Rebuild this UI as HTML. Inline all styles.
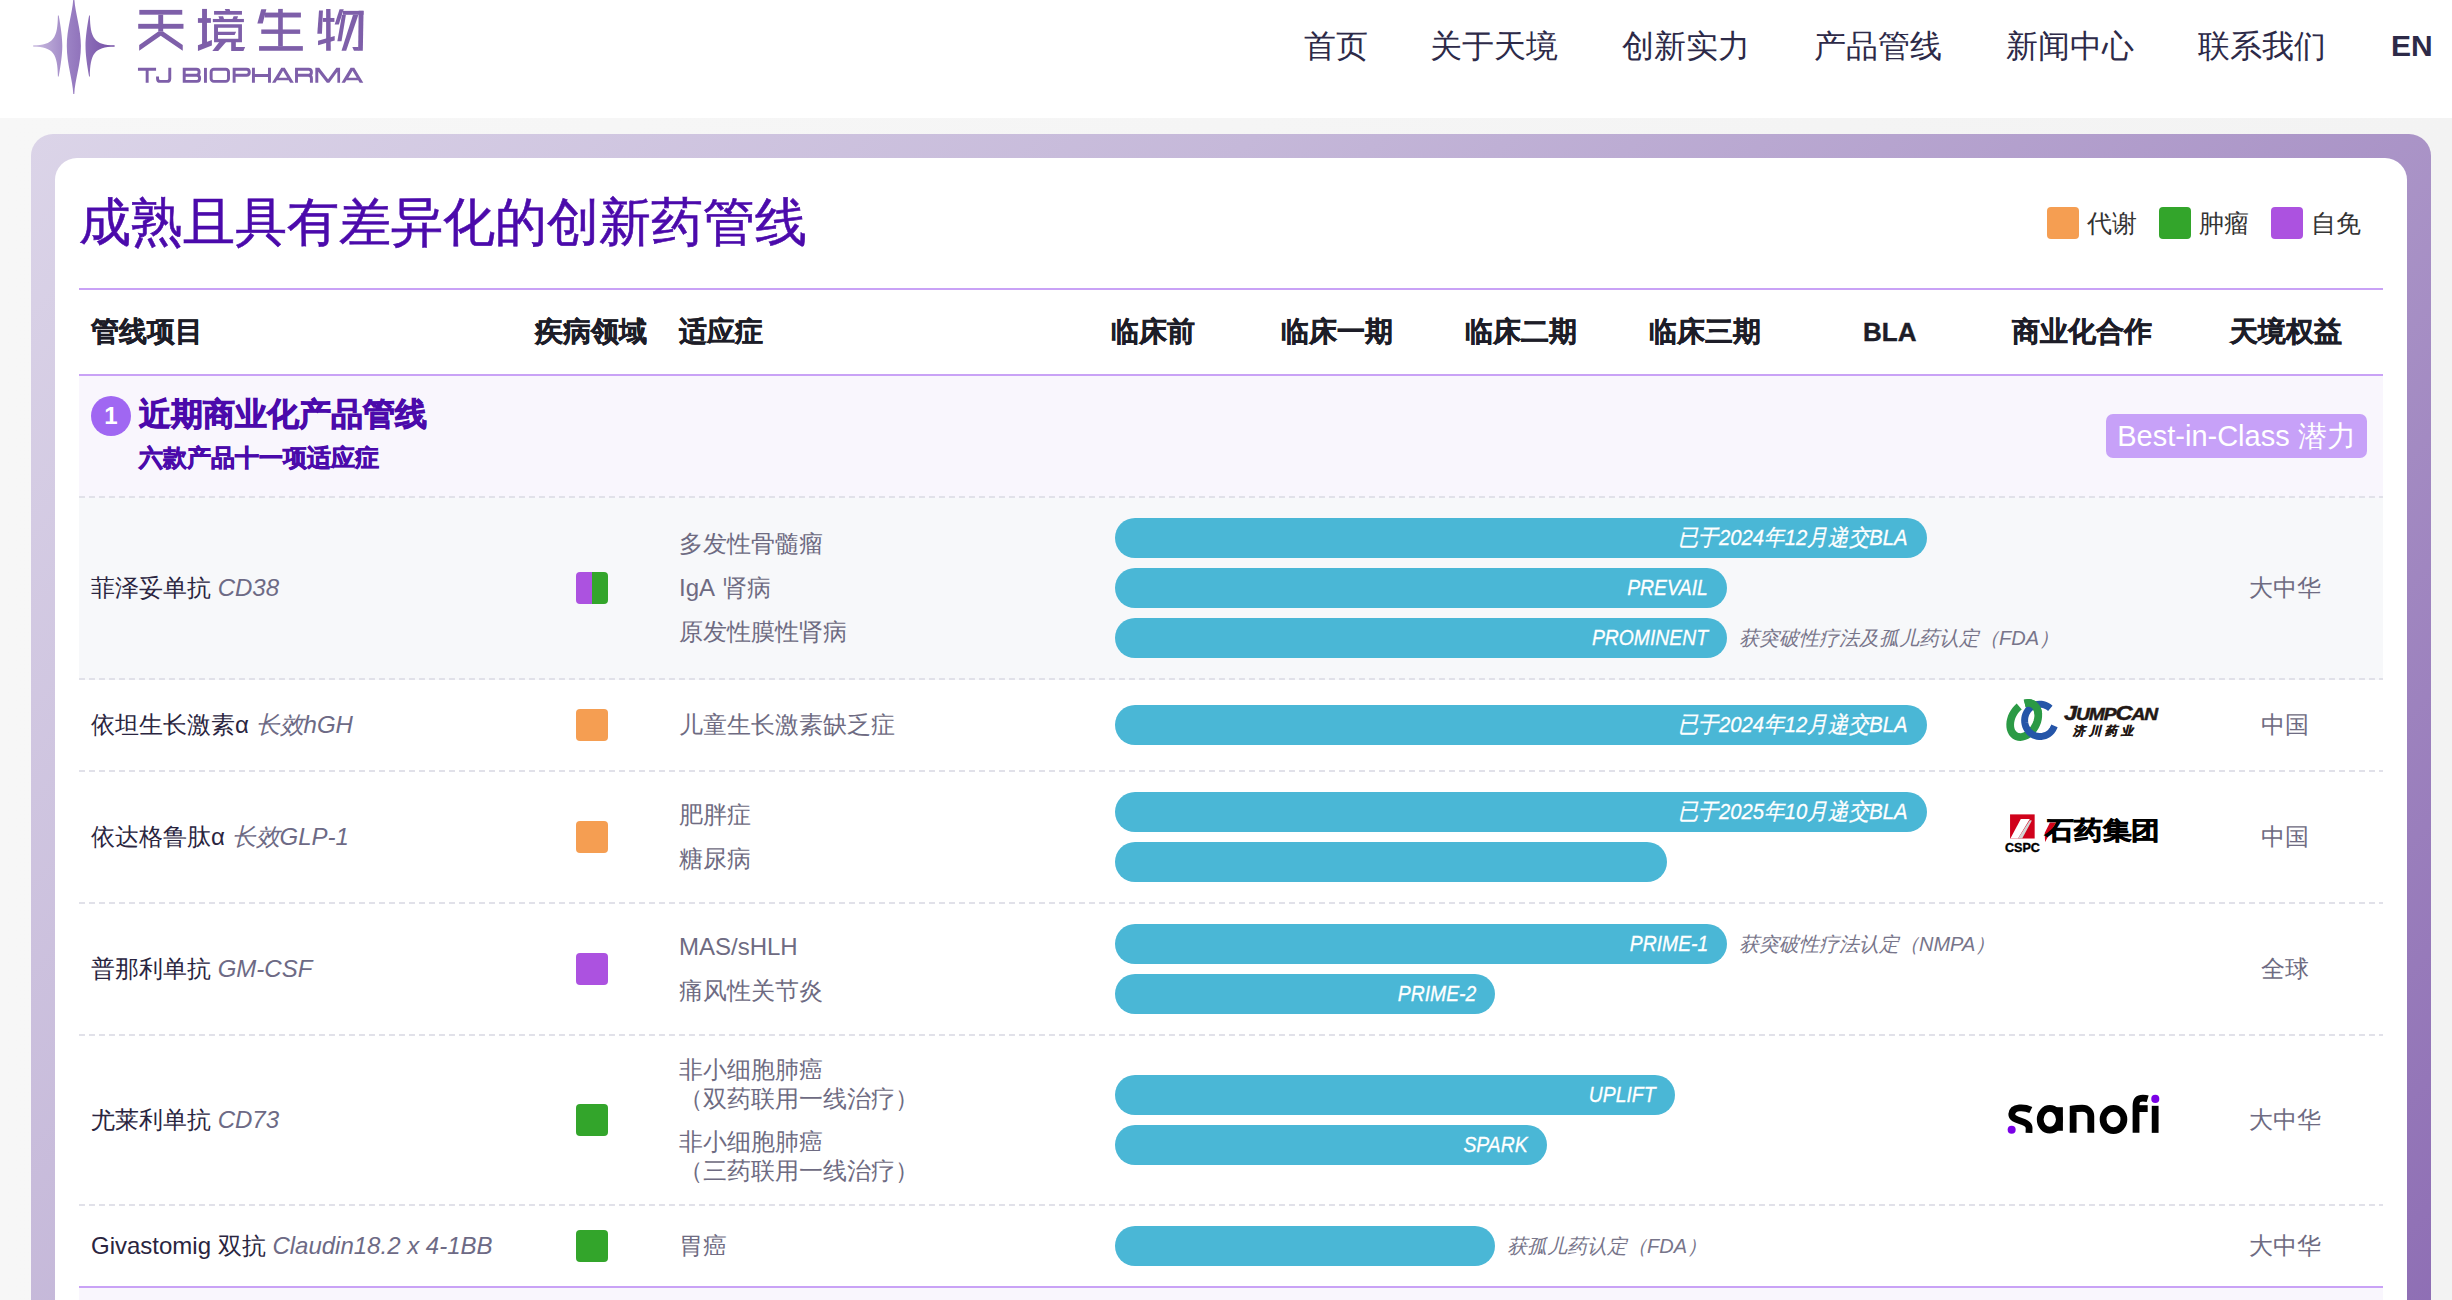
<!DOCTYPE html>
<html><head><meta charset="utf-8">
<style>
*{margin:0;padding:0;box-sizing:border-box}
html,body{width:2452px;height:1300px;overflow:hidden;background:#fff;font-family:"Liberation Sans",sans-serif}
.abs{position:absolute}
#hdr{position:absolute;left:0;top:0;width:2452px;height:118px;background:#fff}
#gbg{position:absolute;left:0;top:118px;width:2452px;height:1182px;background:linear-gradient(90deg,#f7f7f7,#f3f3f3)}
#panel{position:absolute;left:31px;top:134px;width:2400px;height:1200px;border-radius:22px;background:linear-gradient(135deg,#dbd4e8 0%,#c5b8d9 34%,#8e6eb4 100%)}
#card{position:absolute;left:55px;top:158px;width:2352px;height:1200px;border-radius:22px;background:#fff}
.nav{position:absolute;top:22px;height:48px;line-height:48px;font-size:32px;color:#2d2a48;white-space:nowrap}
.t{position:absolute;white-space:nowrap}
.leg{position:absolute;top:207px;width:32px;height:32px;border-radius:4px}
.legt{position:absolute;top:204px;height:38px;line-height:38px;font-size:25px;color:#333;white-space:nowrap}
.hline{position:absolute;left:79px;width:2304px;height:2px;background:#c9a2f6}
.th{position:absolute;top:312px;height:40px;line-height:40px;font-size:28px;font-weight:bold;color:#1d1d28;white-space:nowrap;-webkit-text-stroke:0.4px #1d1d28}
.row{position:absolute;left:79px;width:2304px}
.dash{position:absolute;left:79px;width:2304px;height:2px;background:repeating-linear-gradient(90deg,#e1e1e9 0 6px,transparent 6px 10px)}
.nm{position:absolute;left:91px;margin-top:1px;height:36px;line-height:36px;font-size:24px;color:#2a2540;white-space:nowrap}
.nm i{color:#6d6a85}
.sq{position:absolute;left:576px;width:32px;height:32px;border-radius:4px}
.ind{position:absolute;left:679px;margin-top:1px;height:36px;line-height:36px;font-size:24px;color:#6e6b82;white-space:nowrap}
.bar{position:absolute;left:1115px;height:40px;border-radius:20px;background:#4ab7d6;color:#fff;font-style:italic;font-size:22.5px;line-height:40px;text-align:right;padding-right:19px;white-space:nowrap;-webkit-text-stroke:0.3px #fff}
.note{position:absolute;height:40px;line-height:40px;font-size:20px;font-style:italic;color:#77758a;white-space:nowrap}
.rt{position:absolute;margin-top:1px;height:36px;line-height:36px;font-size:24px;color:#6e6b82;white-space:nowrap;text-align:center;width:120px;left:2225px}
</style></head><body>
<div id="hdr"></div>
<div id="gbg"></div>
<div id="panel"></div>
<div id="card"></div>


<!-- logo star -->
<svg class="abs" style="left:0;top:0" width="130" height="100" viewBox="0 0 130 100">
<defs><linearGradient id="lg" x1="33" y1="0" x2="114" y2="0" gradientUnits="userSpaceOnUse"><stop offset="0" stop-color="#cbbde0"/><stop offset="0.45" stop-color="#9a80c3"/><stop offset="1" stop-color="#7550a6"/></linearGradient></defs>
<path fill="url(#lg)" d="M57.9,15.5 L58.7,15.5 C60.8,27 62.3,38 62.3,46 C62.3,54 60.8,65 58.7,76.5 L57.9,76.5 C57.6,54 53.5,46.7 33.2,46.7 L33.2,45.3 C53.5,45.3 57.6,38 57.9,15.5 Z"/>
<path fill="url(#lg)" d="M89.9,15.5 L89.1,15.5 C87,27 85.5,38 85.5,46 C85.5,54 87,65 89.1,76.5 L89.9,76.5 C90.2,54 94.3,46.7 114.6,46.7 L114.6,45.3 C94.3,45.3 90.2,38 89.9,15.5 Z"/>
<path fill="url(#lg)" d="M73.3,-2 L74.3,-2 C74.8,12 80.9,28 80.9,46 C80.9,64 74.8,80 74.3,94 L73.3,94 C72.8,80 66.8,64 66.8,46 C66.8,28 72.8,12 73.3,-2 Z"/>
</svg>
<!-- logo text -->
<svg class="abs" style="left:135px;top:5px" width="240" height="83" viewBox="0 0 4903 1696" fill="#7e5fa9">
<g>
<rect x="88" y="100" width="877" height="98"/>
<rect x="65" y="385" width="925" height="100"/>
<rect x="475" y="198" width="100" height="345"/>
<polygon points="475,540 85,815 85,935 525,630 975,935 975,815 575,540"/>
</g>
<g>
<rect x="1370" y="80" width="100" height="720"/>
<rect x="1285" y="268" width="265" height="97"/>
<polygon points="1285,825 1570,715 1570,830 1285,940"/>
<polygon points="1835,80 1930,80 1945,125 1850,125"/>
<rect x="1615" y="122" width="570" height="76"/>
<polygon points="1705,230 1800,230 1820,290 1725,290"/>
<polygon points="2015,230 2105,230 2085,290 1990,290"/>
<rect x="1590" y="285" width="635" height="65"/>
<path fill-rule="evenodd" d="M1615,395 H2185 V760 H1615 Z M1695,465 V545 H2065 L2035,615 H1695 V690 H2110 V465 Z"/>
<polygon points="1720,755 1860,755 1700,940 1580,940"/>
<polygon points="1965,755 2060,755 2060,860 2250,860 2215,940 1965,940"/>
</g>
<g transform="translate(2349.5,0)">
<polygon points="230,85 335,85 260,380 150,380"/>
<rect x="300" y="155" width="740" height="100"/>
<rect x="575" y="80" width="95" height="760"/>
<rect x="230" y="500" width="795" height="90"/>
<rect x="185" y="840" width="895" height="95"/>
<polygon points="1410,110 1490,110 1470,585 1375,585"/>
<rect x="1490" y="265" width="235" height="80"/>
<polygon points="1555,80 1645,80 1650,935 1555,935"/>
<polygon points="1390,730 1730,635 1730,725 1390,825"/>
<polygon points="1830,85 1915,85 1815,400 1730,400"/>
<rect x="1900" y="120" width="420" height="80"/>
<polygon points="1880,200 1960,200 1870,740 1785,740"/>
<polygon points="2105,200 2215,200 1965,935 1870,935"/>
<polygon points="2220,120 2320,120 2305,935 2210,935"/>
<polygon points="2090,860 2220,860 2220,935 2125,935"/>
</g>
<g transform="translate(0,1164.5)" fill="none" stroke="#7e5fa9" stroke-width="60">
<path d="M60,149 H430 M248,149 V425"/>
<path d="M710,120 V340 Q710,396 654,396 H516 Q460,396 460,340 V295"/>
<path d="M1005,425 V149 H1255 Q1310,149 1310,205 Q1310,270 1255,270 H1005 M1005,270 H1265 Q1320,270 1320,332 Q1320,396 1265,396 H1005"/>
<path d="M1439,120 V425"/>
<rect x="1555" y="149" width="355" height="247" rx="55"/>
<path d="M2025,425 V149 H2280 Q2335,149 2335,210 Q2335,270 2280,270 H2025"/>
</g>
<g transform="translate(2349.5,1164.5)">
<g fill="none" stroke="#7e5fa9" stroke-width="60">
<path d="M70,120 V425 M398,120 V425 M70,275 H398"/>
<path d="M950,425 V149 H1200 Q1255,149 1255,210 Q1255,270 1200,270 H950 M1200,270 Q1255,280 1255,330 V425"/>
</g>
<path fill-rule="evenodd" d="M640,120 L710,120 L895,425 L820,425 L790,375 L550,375 L520,425 L450,425 Z M675,180 L760,320 L590,320 Z"/>
<polygon points="1335,120 1415,120 1595,355 1765,120 1840,120 1840,425 1785,425 1785,200 1620,425 1570,425 1395,200 1395,425 1335,425"/>
<path fill-rule="evenodd" d="M2055,120 L2130,120 L2315,425 L2240,425 L2210,375 L1970,375 L1940,425 L1870,425 Z M2095,180 L2180,320 L2010,320 Z"/>
</g>
</svg>

<!-- nav -->
<div class="nav" style="left:1304px">首页</div>
<div class="nav" style="left:1430px">关于天境</div>
<div class="nav" style="left:1622px">创新实力</div>
<div class="nav" style="left:1814px">产品管线</div>
<div class="nav" style="left:2006px">新闻中心</div>
<div class="nav" style="left:2198px">联系我们</div>
<div class="nav" style="left:2391px;font-weight:bold;font-size:30px">EN</div>

<!-- title -->
<div class="t" style="left:79px;top:188px;height:68px;line-height:68px;font-size:52px;color:#4b0aab;-webkit-text-stroke:0.6px #4b0aab">成熟且具有差异化的创新药管线</div>

<!-- legend -->
<div class="leg" style="left:2047px;background:#f59e52"></div><div class="legt" style="left:2087px">代谢</div>
<div class="leg" style="left:2159px;background:#33a52b"></div><div class="legt" style="left:2199px">肿瘤</div>
<div class="leg" style="left:2271px;background:#ac52e0"></div><div class="legt" style="left:2311px">自免</div>

<div class="hline" style="top:288px"></div>
<div class="th" style="left:91px">管线项目</div>
<div class="th" style="left:535px">疾病领域</div>
<div class="th" style="left:679px">适应症</div>
<div class="th" style="left:1111px">临床前</div>
<div class="th" style="left:1281px">临床一期</div>
<div class="th" style="left:1465px">临床二期</div>
<div class="th" style="left:1649px">临床三期</div>
<div class="th" style="left:1863px;font-size:26px">BLA</div>
<div class="th" style="left:2012px">商业化合作</div>
<div class="th" style="left:2230px">天境权益</div>
<div class="hline" style="top:374px"></div>

<!-- section -->
<div class="row" style="top:376px;height:122px;background:#f9f6fd"></div>
<div class="abs" style="left:91px;top:396px;width:40px;height:40px;border-radius:20px;background:#a067f2;color:#fff;font-weight:bold;font-size:24px;line-height:40px;text-align:center">1</div>
<div class="t" style="left:139px;top:394px;height:40px;line-height:40px;font-size:32px;font-weight:bold;color:#4b0aab;-webkit-text-stroke:0.9px #4b0aab">近期商业化产品管线</div>
<div class="t" style="left:139px;top:442px;height:32px;line-height:32px;font-size:24px;font-weight:bold;color:#4b0aab;-webkit-text-stroke:0.7px #4b0aab">六款产品十一项适应症</div>
<div class="abs" style="left:2106px;top:414px;width:261px;height:44px;border-radius:7px;background:#c7a1f8;color:#fff;font-size:29px;line-height:44px;text-align:center;white-space:nowrap">Best-in-Class 潜力</div>
<div class="dash" style="top:496px"></div>

<!-- row1 -->
<div class="row" style="top:498px;height:182px;background:#f7f8fa"></div>
<div class="dash" style="top:678px"></div>
<div class="nm" style="top:569px">菲泽妥单抗 <i>CD38</i></div>
<div class="sq" style="top:572px;background:linear-gradient(90deg,#ac52e0 50%,#33a52b 50%)"></div>
<div class="ind" style="top:525px">多发性骨髓瘤</div>
<div class="ind" style="top:569px;word-spacing:3px">IgA 肾病</div>
<div class="ind" style="top:613px">原发性膜性肾病</div>
<div class="bar" style="top:518px;width:812px"><span style="display:inline-block;transform:scaleX(0.9);transform-origin:100% 50%">已于2024年12月递交BLA</span></div>
<div class="bar" style="top:568px;width:612px"><span style="display:inline-block;transform:scaleX(0.86);transform-origin:100% 50%">PREVAIL</span></div>
<div class="bar" style="top:618px;width:612px"><span style="display:inline-block;transform:scaleX(0.86);transform-origin:100% 50%">PROMINENT</span></div>
<div class="note" style="left:1739px;top:618px">获突破性疗法及孤儿药认定（FDA）</div>
<div class="rt" style="top:569px">大中华</div>

<!-- row2 -->
<div class="dash" style="top:770px"></div>
<div class="nm" style="top:706px">依坦生长激素α <i>长效hGH</i></div>
<div class="sq" style="top:709px;background:#f59e52"></div>
<div class="ind" style="top:706px">儿童生长激素缺乏症</div>
<div class="bar" style="top:705px;width:812px"><span style="display:inline-block;transform:scaleX(0.9);transform-origin:100% 50%">已于2024年12月递交BLA</span></div>
<div class="rt" style="top:706px">中国</div>

<!-- row3 -->
<div class="dash" style="top:902px"></div>
<div class="nm" style="top:818px">依达格鲁肽α <i>长效GLP-1</i></div>
<div class="sq" style="top:821px;background:#f59e52"></div>
<div class="ind" style="top:796px">肥胖症</div>
<div class="ind" style="top:840px">糖尿病</div>
<div class="bar" style="top:792px;width:812px"><span style="display:inline-block;transform:scaleX(0.9);transform-origin:100% 50%">已于2025年10月递交BLA</span></div>
<div class="bar" style="top:842px;width:552px"></div>
<div class="rt" style="top:818px">中国</div>

<!-- row4 -->
<div class="dash" style="top:1034px"></div>
<div class="nm" style="top:950px">普那利单抗 <i>GM-CSF</i></div>
<div class="sq" style="top:953px;background:#ac52e0"></div>
<div class="ind" style="top:928px">MAS/sHLH</div>
<div class="ind" style="top:972px">痛风性关节炎</div>
<div class="bar" style="top:924px;width:612px"><span style="display:inline-block;transform:scaleX(0.86);transform-origin:100% 50%">PRIME-1</span></div>
<div class="bar" style="top:974px;width:380px"><span style="display:inline-block;transform:scaleX(0.86);transform-origin:100% 50%">PRIME-2</span></div>
<div class="note" style="left:1739px;top:924px">获突破性疗法认定（NMPA）</div>
<div class="rt" style="top:950px">全球</div>

<!-- row5 -->
<div class="dash" style="top:1204px"></div>
<div class="nm" style="top:1101px">尤莱利单抗 <i>CD73</i></div>
<div class="sq" style="top:1104px;background:#33a52b"></div>
<div class="ind" style="top:1051px">非小细胞肺癌</div>
<div class="ind" style="top:1080px">（双药联用一线治疗）</div>
<div class="ind" style="top:1123px">非小细胞肺癌</div>
<div class="ind" style="top:1152px">（三药联用一线治疗）</div>
<div class="bar" style="top:1075px;width:560px"><span style="display:inline-block;transform:scaleX(0.86);transform-origin:100% 50%">UPLIFT</span></div>
<div class="bar" style="top:1125px;width:432px"><span style="display:inline-block;transform:scaleX(0.86);transform-origin:100% 50%">SPARK</span></div>
<div class="rt" style="top:1101px">大中华</div>


<!-- jumpcan -->
<svg class="abs" style="left:2000px;top:695px" width="70" height="50" viewBox="0 0 1820 1300">
<g fill="none">
<path stroke="#2b9a45" stroke-width="200" d="M644,221 L697,210 L749,207 L798,215 L844,232 L885,257 L921,292 L950,334 L972,383 L987,437 L995,496 L994,559 L986,624 L970,689 L946,753 L916,815 L880,873 L838,927 L791,975 L742,1015 L689,1048 L636,1072 L582,1087 L530,1093 L479,1089 L432,1076 L389,1053 L352,1022 L320,982 L295,936 L277,883 L267,826 L265,764 L270,700 L284,635 L304,570 L332,507 L366,448 L406,392 L451,342 L500,299"/>
<path stroke="#2555a8" stroke-width="180" d="M1308,348 L1268,315 L1224,287 L1177,266 L1129,250 L1078,242 L1027,240 L977,245 L927,257 L879,275 L834,300 L792,330 L754,366 L721,407 L693,451 L670,499 L654,550 L644,602 L640,656 L643,709 L652,762 L667,813 L689,861 L716,906 L748,948 L786,984 L827,1015 L872,1041 L919,1060 L968,1073 L1019,1079 L1070,1079 L1120,1071 L1170,1057 L1217,1037 L1261,1010 L1301,978 L1338,940 L1369,898 L1395,853 L1416,804"/>
<path stroke="#2b9a45" stroke-width="200" d="M644,221 L657,217 L671,214 L684,212 L697,209 L711,208 L724,207 L737,207 L750,207 L763,208 L775,210 L787,212 L800,215 L811,219 L823,223 L834,227 L846,232 L856,238 L867,244 L877,251 L887,259 L896,267 L905,275 L914,284 L922,294 L930,304 L938,314 L945,325 L952,337 L958,348 L964,361 L969,373 L974,386 L978,400 L982,413 L985,427 L988,442 L991,456 L993,471 L994,487 L995,502"/>
</g>
</svg>
<div class="abs" style="left:2064px;top:700px;width:100px;height:26px;white-space:nowrap;font-weight:bold;font-style:italic;color:#231815;line-height:26px;font-size:17px;letter-spacing:-1px;transform:scaleX(1.13);transform-origin:0 0;-webkit-text-stroke:0.5px #231815"><span style="font-size:21px">J</span>UMP<span style="font-size:21px">C</span>AN</div>
<div class="abs" style="left:2073px;top:723px;height:16px;line-height:16px;white-space:nowrap;font-weight:bold;font-style:italic;color:#231815;font-size:12px;letter-spacing:4px;-webkit-text-stroke:0.4px #231815">济川药业</div>

<!-- cspc -->
<svg class="abs" style="left:2000px;top:808px" width="170" height="50" viewBox="0 0 2452 721">
<rect x="145" y="92" width="355" height="348" fill="#d0021b"/>
<polygon points="300,160 430,160 260,440 150,440" fill="#fff"/>
<polygon points="430,175 460,180 320,440 260,440" fill="#d4d4d4"/>
<polygon points="720,210 805,210 650,490 645,360" fill="#d0021b"/>
</svg>
<div class="abs" style="left:2005px;top:840px;height:16px;line-height:16px;font-size:13.5px;font-weight:bold;color:#000;white-space:nowrap;transform:scaleX(0.93);transform-origin:0 0;-webkit-text-stroke:0.4px #000">CSPC</div>
<div class="abs" style="left:2045px;top:814px;height:32px;line-height:32px;font-size:25px;font-weight:bold;color:#000;white-space:nowrap;transform:scaleX(1.15);transform-origin:0 0;-webkit-text-stroke:0.6px #000">石药集团</div>

<!-- sanofi -->
<svg class="abs" style="left:2000px;top:1085px" width="170" height="60" viewBox="0 0 2452 865">
<g fill="none" stroke="#000" stroke-width="98">
<path d="M445,360 C360,320 180,300 170,420 C165,530 420,505 420,620 L418,690"/>
<ellipse cx="718" cy="495" rx="138" ry="157"/>
<path d="M858,320 V660"/>
<path d="M1055,690 V345 C1110,335 1150,335 1185,335 C1270,335 1310,390 1310,450 V690"/>
<ellipse cx="1637" cy="497" rx="150" ry="160"/>
<path d="M1962,690 V300 C1962,200 2010,190 2060,190 C2090,190 2110,192 2130,198"/>
<path d="M1962,340 H2130"/>
<path d="M2238,300 V690"/>
</g>
<circle cx="168" cy="645" r="58" fill="#7a00e6"/>
<circle cx="2240" cy="200" r="58" fill="#7a00e6"/>
</svg>

<!-- row6 -->
<div class="nm" style="top:1227px">Givastomig 双抗 <i>Claudin18.2 x 4-1BB</i></div>
<div class="sq" style="top:1230px;background:#33a52b"></div>
<div class="ind" style="top:1227px">胃癌</div>
<div class="bar" style="top:1226px;width:380px"></div>
<div class="note" style="left:1507px;top:1226px">获孤儿药认定（FDA）</div>
<div class="rt" style="top:1227px">大中华</div>
<div class="hline" style="top:1286px"></div>
<div class="row" style="top:1288px;height:20px;background:#f9f6fd"></div>

</body></html>
